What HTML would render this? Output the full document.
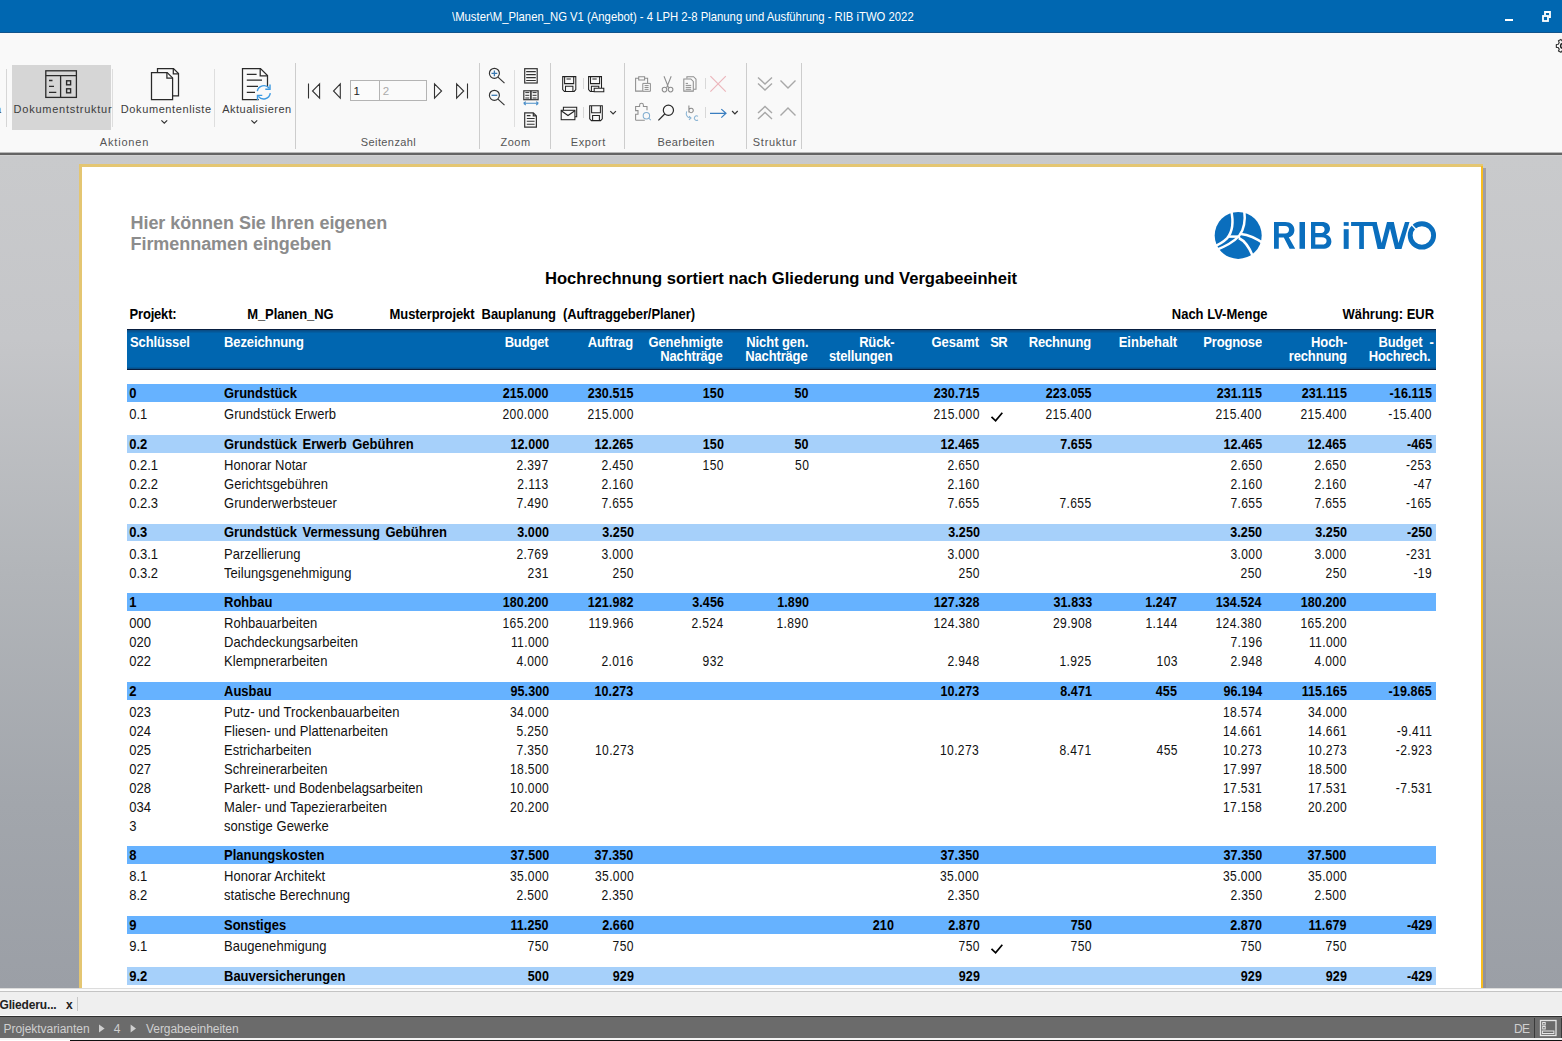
<!DOCTYPE html>
<html><head><meta charset="utf-8"><title>RIB iTWO</title>
<style>
html,body{margin:0;padding:0;}
body{width:1562px;height:1041px;position:relative;overflow:hidden;background:#fff;font-family:"Liberation Sans", sans-serif;}
.t{position:absolute;white-space:nowrap;line-height:1;font-family:"Liberation Sans", sans-serif;}
.tb{transform:scaleY(1.09);transform-origin:0 11px;}
svg{overflow:visible}
</style></head><body>
<div style="position:absolute;left:0;top:0;width:1562px;height:32px;background:#0067b1"></div><div style="position:absolute;left:0;top:32px;width:1562px;height:1px;background:#11548c"></div>
<div class="t" style="left:451.5px;top:10.80px;font-size:12.4px;color:#fff;font-weight:normal;transform:scaleX(0.912);transform-origin:0 0;">\Muster\M_Planen_NG V1 (Angebot) - 4 LPH 2-8 Planung und Ausführung - RIB iTWO 2022</div>
<div style="position:absolute;left:1505px;top:19px;width:8px;height:2px;background:#fff"></div>
<svg style="position:absolute;left:1540px;top:9px" width="14" height="15" viewBox="0 0 14 15"><path d="M5 6V3H10V8H9" fill="none" stroke="#fff" stroke-width="1.8"/><rect x="3" y="7" width="5" height="5" fill="none" stroke="#fff" stroke-width="1.8"/></svg>
<div style="position:absolute;left:0;top:33px;width:1562px;height:119px;background:#f9f9f9"></div>
<div style="position:absolute;left:0;top:152px;width:1562px;height:1px;background:#b8b8b8"></div>
<div style="position:absolute;left:0;top:153px;width:1562px;height:2px;background:#646464"></div>
<div style="position:absolute;left:0;top:155px;width:1562px;height:1px;background:#d2d2d2"></div>
<div style="position:absolute;left:295px;top:63px;width:1px;height:86px;background:#cdcdcd"></div>
<div style="position:absolute;left:479px;top:63px;width:1px;height:86px;background:#cdcdcd"></div>
<div style="position:absolute;left:550px;top:63px;width:1px;height:86px;background:#cdcdcd"></div>
<div style="position:absolute;left:624px;top:63px;width:1px;height:86px;background:#cdcdcd"></div>
<div style="position:absolute;left:746px;top:63px;width:1px;height:86px;background:#cdcdcd"></div>
<div style="position:absolute;left:801px;top:63px;width:1px;height:86px;background:#cdcdcd"></div>
<div style="position:absolute;left:6px;top:69px;width:1px;height:58px;background:#d6d6d6"></div>
<div style="position:absolute;left:112px;top:69px;width:1px;height:58px;background:#dedede"></div>
<div style="position:absolute;left:214px;top:69px;width:1px;height:58px;background:#dedede"></div>
<div style="position:absolute;left:514px;top:70px;width:1px;height:57px;background:#dedede"></div>
<div style="position:absolute;left:12px;top:65px;width:99px;height:65px;background:#d6d6d6"></div>
<div class="t" style="left:-5px;top:104.29px;font-size:11px;color:#3c3c3c;font-weight:normal;">a</div>
<svg style="position:absolute;left:44px;top:69px" width="34" height="30" viewBox="0 0 34 30" fill="none" stroke="#2a2a2a" stroke-width="1.3">
<rect x="1.8" y="1.8" width="30.6" height="26.6"/><path d="M1.8 6.6H32.4M16.6 6.6V28.4M5 11.5H8.5M5 17.3H10M5 23.3H12.3"/>
<rect x="22.6" y="11.8" width="4" height="4" stroke-width="1.4"/><rect x="22.6" y="19.8" width="4" height="4" stroke-width="1.4"/></svg>
<div class="t" style="left:13.6px;top:104.29px;font-size:11px;color:#3c3c3c;font-weight:normal;letter-spacing:0.75px;">Dokumentstruktur</div>
<svg style="position:absolute;left:150px;top:67px" width="32" height="34" viewBox="0 0 32 34" fill="none" stroke="#2a2a2a" stroke-width="1.25">
<path d="M7.5 5.2V1.5H23.5L28.5 6.5V28.8H22.8"/><path d="M23.3 1.5V6.8H28.5"/>
<path d="M1.5 5.5H17.2L22.6 10.9V32.5H1.5Z"/><path d="M16.9 5.5V11.2H22.6"/></svg>
<div class="t" style="left:120.8px;top:104.29px;font-size:11px;color:#3c3c3c;font-weight:normal;letter-spacing:0.6px;">Dokumentenliste</div>
<svg style="position:absolute;left:160px;top:119px" width="9" height="6" viewBox="0 0 9 6"><path d="M1.4 1.3L4.3 4.2L7.2 1.3" fill="none" stroke="#333" stroke-width="1.2"/></svg>
<svg style="position:absolute;left:241px;top:67px" width="34" height="34" viewBox="0 0 34 34" fill="none" stroke-width="1.25">
<path d="M17.8 32.5H1.5V1.5H19.5L26.5 8.5V20" stroke="#2a2a2a"/><path d="M19.2 1.5V8.8H26.5" stroke="#2a2a2a"/>
<path d="M5.8 7.3H15.6M5.8 13.2H21M5.8 19.3H17M5.8 25.3H14" stroke="#2a2a2a"/>
<path d="M16.3 24.2A6.7 6.7 0 0 1 28.2 21.3" stroke="#3d9ae2" stroke-width="1.4"/><path d="M29 17.5V22.3H24.3" stroke="#3d9ae2" stroke-width="1.4"/>
<path d="M29.3 26.2A6.7 6.7 0 0 1 17.4 29.4" stroke="#3d9ae2" stroke-width="1.4"/><path d="M16.5 33V28.4H21.3" stroke="#3d9ae2" stroke-width="1.4"/></svg>
<div class="t" style="left:222.2px;top:104.29px;font-size:11px;color:#3c3c3c;font-weight:normal;letter-spacing:0.5px;">Aktualisieren</div>
<svg style="position:absolute;left:250px;top:119px" width="9" height="6" viewBox="0 0 9 6"><path d="M1.4 1.3L4.3 4.2L7.2 1.3" fill="none" stroke="#333" stroke-width="1.2"/></svg>
<div class="t" style="left:99.8px;top:137.49px;font-size:11px;color:#555;font-weight:normal;letter-spacing:0.82px;">Aktionen</div>
<svg style="position:absolute;left:300px;top:76px" width="180" height="30" viewBox="0 0 180 30" fill="none" stroke="#333" stroke-width="1.1">
<path d="M8.5 7.4V22.6M19.6 7.8L12.5 15L19.6 22.2Z M40.3 7.8L33.5 15L40.3 22.2Z M134.5 7.8L141.6 15L134.5 22.2Z M156.6 7.8L163.7 15L156.6 22.2Z M167.5 7.4V22.6"/></svg>
<div style="position:absolute;left:350px;top:80px;width:28px;height:19px;border:1px solid #b4b4b4;background:#fbfbfb"></div>
<div style="position:absolute;left:379px;top:80px;width:46px;height:19px;border:1px solid #b4b4b4;background:#fafafa"></div>
<div class="t" style="left:353.5px;top:86.07px;font-size:11.5px;color:#222;font-weight:normal;">1</div>
<div class="t" style="left:382.8px;top:86.07px;font-size:11.5px;color:#aaa;font-weight:normal;">2</div>
<div class="t" style="left:360.8px;top:137.49px;font-size:11px;color:#555;font-weight:normal;letter-spacing:0.4px;">Seitenzahl</div>
<svg style="position:absolute;left:486px;top:66px" width="60" height="64" viewBox="0 0 60 64" fill="none" stroke="#333" stroke-width="1.15">
<circle cx="8.4" cy="7.3" r="5"/><path d="M8.4 4.4V10.2M5.5 7.3H11.3" stroke="#3a78b0" stroke-width="1.3"/><path d="M12 11.2L18.5 17.2"/>
<circle cx="8.4" cy="29.3" r="5"/><path d="M5.5 29.3H11.3" stroke="#3a78b0" stroke-width="1.3"/><path d="M12 33.2L18.5 39.2"/>
<rect x="38.7" y="2.7" width="12.5" height="14.3" stroke-width="1.2"/><path d="M40.2 5.6H49.8M40.2 8.6H49.8M40.2 11.6H49.8M40.2 14.5H49.8" stroke-width="1.1"/>
<rect x="37.8" y="24.8" width="14.3" height="8.9" stroke-width="1.2"/><path d="M44.9 24.8V33.7" stroke-width="1.6"/><path d="M39.3 26.6H43.3M39.3 29.3H43.3M39.3 32H43.3M46.6 26.6H50.6M46.6 29.3H50.6M46.6 32H50.6" stroke-width="1"/>
<path d="M37.6 37.3H52.4M37.6 37.3L39.8 35.6M37.6 37.3L39.8 39M52.4 37.3L50.2 35.6M52.4 37.3L50.2 39" stroke="#4a8ec8" stroke-width="1.1"/>
<path d="M38.7 46.8H47.3L50.4 49.9V61.1H38.7Z M47.3 46.8V49.9H50.4" stroke-width="1.2"/><path d="M40.8 49.6H44.5M40.8 52.4H48.6M40.8 55.3H48.6M40.8 58.2H48.6" stroke-width="1.05"/></svg>
<div class="t" style="left:500.5px;top:137.49px;font-size:11px;color:#555;font-weight:normal;letter-spacing:0.5px;">Zoom</div>
<svg style="position:absolute;left:556px;top:70px" width="70" height="56" viewBox="0 0 70 56" fill="none" stroke="#222" stroke-width="1.05">
<path d="M6.7 6.6H19.8V19.6L18.2 21.4H8.4L6.7 19.6Z M8.6 6.6V13.6H17.7V6.6 M10.5 8.9H14.8 M9.5 21.4V16.3H16.9V21.4"/>
<path d="M38.2 21.4H34.3L32.6 19.6V6.6H45.5V18.2 M34.5 6.6V13.6H43.6V6.6 M36.4 8.9H40.7 M35.4 21.4V16.3H42.8V18.2 M38.2 18.2H47.8V21.7H38.2Z"/>
<path d="M7.4 40.3V37.3H20.7V46.7H18.9"/><rect x="5.2" y="40.3" width="13.7" height="9.4" fill="#f9f9f9"/><path d="M5.2 40.8L12 45.5L18.9 40.8"/>
<path d="M33.7 35.8H46.3V48.8L44.6 50.6H35.4L33.7 48.8Z M35.6 35.8V42.8H44.4V35.8 M36.6 50.6V45.5H43.4V50.6"/>
<path d="M54.3 41.1L57.1 43.9L59.9 41.1" stroke="#333" stroke-width="1.2"/></svg>
<div style="position:absolute;left:583px;top:78px;width:1px;height:11px;background:#d8d8d8"></div>
<div style="position:absolute;left:583px;top:107px;width:1px;height:11px;background:#d8d8d8"></div>
<div class="t" style="left:570.8px;top:137.49px;font-size:11px;color:#555;font-weight:normal;letter-spacing:0.55px;">Export</div>
<svg style="position:absolute;left:630px;top:70px" width="115" height="56" viewBox="0 0 115 56" fill="none" stroke="#8e8e8e" stroke-width="1.05">
<path d="M12.8 21.1H5.6V8.2H8.7 M14.6 8.2H17.6V13 M8.7 6.7H14.6V10H8.7Z"/><path d="M12.8 13.4H20.4V21.3H12.8Z M14.6 15.6H18.6M14.6 17.5H18.6M14.6 19.4H18.6" stroke-width="1"/>
<path d="M34 6.2L38.6 17.8M41.2 6.2L36.6 17.8"/><circle cx="34.5" cy="19.6" r="2.3"/><circle cx="40.6" cy="19.6" r="2.3"/>
<path d="M56.9 8.5V6.7H63.6L66 9.1V19.2H63.8"/><path d="M53.8 8.9H60.8L63.3 11.4V21.1H53.8Z"/><path d="M55.7 13.4H58M55.7 15.4H61.2M55.7 17.4H61.2M55.7 19.3H61.2" stroke-width="1"/>
<path d="M80.4 6.2L95.8 21.6M95.8 6.2L80.4 21.6" stroke="#ecb6bc" stroke-width="1.2"/>
<path d="M5.6 50.3H14.8 M5.6 50.3V44.3H8V40.6H5.6V36.4H9.6V35.2A1.9 1.9 0 0 1 13.4 35.2V36.4H17V40.3"/><circle cx="16.4" cy="45.7" r="3.2" stroke="#82aed0"/><path d="M18.6 48L20.8 50.2" stroke="#82aed0"/>
<circle cx="38.4" cy="40.3" r="5.1" stroke="#2a2a2a" stroke-width="1.2"/><path d="M34.7 44L28.4 50.4" stroke="#2a2a2a" stroke-width="1.25"/>
<path d="M58.9 35.4V42.5 M58.9 40.4A2.2 2.2 0 1 1 58.9 40.5" stroke="#8a8a8a" stroke-width="1.05"/><path d="M56.7 41.4C55.5 44.5 57 47.5 60.3 48" stroke="#8ab4d4"/><path d="M59 46.2L61 48L59 49.8" stroke="#8ab4d4"/><path d="M68 46.3A2.3 2.3 0 1 0 68 50" stroke="#8ab4d4"/>
<path d="M80 43.3H96M91.3 39.1L96 43.3L91.3 47.6" stroke="#3a7ec0" stroke-width="1.2"/>
<path d="M102.1 41L104.9 43.9L107.7 41" stroke="#333" stroke-width="1.2"/></svg>
<div style="position:absolute;left:705px;top:78px;width:1px;height:11px;background:#d8d8d8"></div>
<div style="position:absolute;left:705px;top:107px;width:1px;height:11px;background:#d8d8d8"></div>
<div class="t" style="left:657.6px;top:137.49px;font-size:11px;color:#555;font-weight:normal;letter-spacing:0.4px;">Bearbeiten</div>
<svg style="position:absolute;left:750px;top:70px" width="52" height="56" viewBox="0 0 52 56" fill="none" stroke="#a8a8a8" stroke-width="1.4">
<path d="M8 7.5L15 14L22 7.5M8 13.5L15 20L22 13.5M30.5 10.5L38 18L45.5 10.5"/>
<path d="M8 43L15 36.5L22 43M8 49L15 42.5L22 49M30.5 45.5L38 38L45.5 45.5"/></svg>
<div class="t" style="left:752.8px;top:137.49px;font-size:11px;color:#555;font-weight:normal;letter-spacing:0.72px;">Struktur</div>
<svg style="position:absolute;left:1550px;top:36px" width="12" height="20" viewBox="0 0 12 20"><path d="M17.33 7.40 L17.73 8.27 L19.65 8.49 L19.65 11.31 L17.73 11.53 L17.33 12.40 L16.77 13.18 L17.55 14.95 L15.10 16.37 L13.95 14.81 L13.00 14.90 L12.05 14.81 L10.90 16.37 L8.45 14.95 L9.23 13.18 L8.67 12.40 L8.27 11.53 L6.35 11.31 L6.35 8.49 L8.27 8.27 L8.67 7.40 L9.23 6.62 L8.45 4.85 L10.90 3.43 L12.05 4.99 L13.00 4.90 L13.95 4.99 L15.10 3.43 L17.55 4.85 L16.77 6.62Z" fill="none" stroke="#333" stroke-width="1.15" stroke-linejoin="round"/><circle cx="13.0" cy="9.899999999999999" r="2.4" fill="none" stroke="#222" stroke-width="1.6"/></svg>
<div style="position:absolute;left:0;top:156px;width:1562px;height:832px;background:linear-gradient(#c9cacc 0%,#c5c6c9 22%,#b2b5b9 50%,#a2a6ac 78%,#9b9fa6 100%)"></div>
<div style="position:absolute;left:1483px;top:168px;width:3px;height:820px;background:#8e8c98;opacity:0.7"></div>
<div style="position:absolute;left:79px;top:164px;width:1404px;height:824px;background:#e4c672"></div>
<div style="position:absolute;left:1481px;top:166px;width:2px;height:822px;background:#f8bd20"></div>
<div style="position:absolute;left:82px;top:167px;width:1399px;height:821px;background:#fff"></div>
<div class="t" style="left:130.5px;top:213.96px;font-size:18px;color:#8c8c8c;font-weight:bold;letter-spacing:-0.05px;">Hier können Sie Ihren eigenen</div>
<div class="t" style="left:130.5px;top:234.96px;font-size:18px;color:#8c8c8c;font-weight:bold;letter-spacing:-0.05px;">Firmennamen eingeben</div>
<svg style="position:absolute;left:1210px;top:208px" width="230" height="56" viewBox="1210 208 230 56">
<circle cx="1238.2" cy="235.4" r="23.5" fill="#0a6ebd"/>
<g fill="none" stroke="#fff" stroke-width="2.5">
<path d="M1231 209.5C1233.8 222 1233 231.5 1227 238.3C1223 242.3 1219.5 244.3 1213 247"/>
<path d="M1244.2 209.5C1245.8 222 1243.2 230.8 1239.2 235.8C1234.5 241.2 1227.5 245.8 1214 251"/>
<path d="M1228.5 236.6L1240 236.6"/>
<path d="M1241 233.9C1248.5 234.6 1255.8 237.8 1264.5 244"/>
<path d="M1238.8 238C1245 241 1250.2 247.5 1254.5 261"/>
</g>
<g fill="#0a6ebd">
<path d="M1274 222H1285.2C1291 222 1294.4 225.3 1294.4 229.9C1294.4 233.6 1292.3 236.3 1288.8 237.2L1295.2 248.8H1289.6L1283.8 237.6H1278.8V248.8H1274ZM1278.8 226.1V233.5H1285C1287.6 233.5 1289 232.2 1289 229.8C1289 227.4 1287.6 226.1 1285 226.1Z"/>
<rect x="1299.5" y="222" width="5.5" height="26.8"/>
<path d="M1311 222H1321.8C1326.9 222 1330 224.6 1330 228.6C1330 231.5 1328.5 233.6 1326 234.6C1329.3 235.6 1331.4 238 1331.4 241.4C1331.4 245.9 1328 248.8 1322.2 248.8H1311ZM1315.3 226.1V233H1321.2C1323.3 233 1324.6 231.8 1324.6 229.6C1324.6 227.4 1323.3 226.1 1321.2 226.1ZM1315.3 237.3V244.6H1321.8C1324.8 244.6 1326.6 243.3 1326.6 240.9C1326.6 238.6 1324.8 237.3 1321.8 237.3Z"/>
<rect x="1343.7" y="222.1" width="5" height="3.7"/><rect x="1343.7" y="229.2" width="5" height="19.7"/>
<path d="M1351.1 222.1H1376.6V226.1H1363.9V248.9H1359.2V226.1H1351.1Z"/>
<path d="M1371.6 222.1H1376.6L1381.7 243L1387 222.1H1393.8L1398.5 243L1405 222.1H1409.5L1401.5 248.9H1395.1L1390 228.4L1384.7 248.9H1377.6Z"/>
</g>
<circle cx="1421.9" cy="235.4" r="11.7" fill="none" stroke="#0a6ebd" stroke-width="4.9"/>
<path d="M1411.5 224.5L1416.8 230.2" stroke="#fff" stroke-width="1.3"/>
</svg>
<div class="t" style="left:545px;top:271.15px;font-size:16.6px;color:#000;font-weight:bold;">Hochrechnung sortiert nach Gliederung und Vergabeeinheit</div>
<div class="t tb" style="left:129.6px;top:308.10px;font-size:13px;color:#000;font-weight:bold;letter-spacing:-0.2px;">Projekt:</div>
<div class="t tb" style="left:247.3px;top:308.10px;font-size:13px;color:#000;font-weight:bold;letter-spacing:-0.12px;">M_Planen_NG</div>
<div class="t tb" style="left:389.6px;top:308.10px;font-size:13px;color:#000;font-weight:bold;letter-spacing:-0.08px;">Musterprojekt&nbsp; Bauplanung&nbsp; (Auftraggeber/Planer)</div>
<div class="t tb" style="right:294.4000000000001px;top:308.10px;font-size:13px;color:#000;font-weight:bold;">Nach LV-Menge</div>
<div class="t tb" style="right:127.90000000000009px;top:308.10px;font-size:13px;color:#000;font-weight:bold;">Währung: EUR</div>
<div style="position:absolute;left:127px;top:329px;width:1309px;height:41px;background:#0066b0;border-top:1px solid #081e40;border-bottom:1px solid #081e40;box-sizing:border-box"></div>
<div style="position:absolute;left:127px;top:330px;width:1309px;height:3px;background:linear-gradient(#0c4a80,#0062aa)"></div><div style="position:absolute;left:127px;top:367px;width:1309px;height:2px;background:linear-gradient(#0062aa,#0a4a7e)"></div>
<div class="t tb" style="left:130px;top:335.60px;font-size:13px;color:#fff;font-weight:bold;letter-spacing:-0.1px;">Schlüssel</div>
<div class="t tb" style="left:224px;top:335.60px;font-size:13px;color:#fff;font-weight:bold;letter-spacing:-0.1px;">Bezeichnung</div>
<div class="t tb" style="right:1013.5px;top:335.60px;font-size:13px;color:#fff;font-weight:bold;letter-spacing:-0.15px;">Budget</div>
<div class="t tb" style="right:929px;top:335.60px;font-size:13px;color:#fff;font-weight:bold;letter-spacing:-0.15px;">Auftrag</div>
<div class="t tb" style="right:839px;top:335.60px;font-size:13px;color:#fff;font-weight:bold;letter-spacing:-0.05px;">Genehmigte</div>
<div class="t tb" style="right:839.5px;top:350.30px;font-size:13px;color:#fff;font-weight:bold;letter-spacing:-0.15px;">Nachträge</div>
<div class="t tb" style="right:753.5px;top:335.60px;font-size:13px;color:#fff;font-weight:bold;letter-spacing:-0.05px;">Nicht gen.</div>
<div class="t tb" style="right:754.5px;top:350.30px;font-size:13px;color:#fff;font-weight:bold;letter-spacing:-0.15px;">Nachträge</div>
<div class="t tb" style="right:667.5px;top:335.60px;font-size:13px;color:#fff;font-weight:bold;letter-spacing:-0.15px;">Rück-</div>
<div class="t tb" style="right:669.5px;top:350.30px;font-size:13px;color:#fff;font-weight:bold;letter-spacing:-0.15px;">stellungen</div>
<div class="t tb" style="right:582.8px;top:335.60px;font-size:13px;color:#fff;font-weight:bold;">Gesamt</div>
<div class="t tb" style="left:990.3px;top:335.60px;font-size:13px;color:#fff;font-weight:bold;letter-spacing:-0.8px;">SR</div>
<div class="t tb" style="right:471px;top:335.60px;font-size:13px;color:#fff;font-weight:bold;letter-spacing:-0.15px;">Rechnung</div>
<div class="t tb" style="right:384.79999999999995px;top:335.60px;font-size:13px;color:#fff;font-weight:bold;">Einbehalt</div>
<div class="t tb" style="right:300px;top:335.60px;font-size:13px;color:#fff;font-weight:bold;letter-spacing:-0.15px;">Prognose</div>
<div class="t tb" style="right:214.79999999999995px;top:335.60px;font-size:13px;color:#fff;font-weight:bold;letter-spacing:-0.15px;">Hoch-</div>
<div class="t tb" style="right:215.20000000000005px;top:350.30px;font-size:13px;color:#fff;font-weight:bold;letter-spacing:-0.15px;">rechnung</div>
<div class="t tb" style="right:128.20000000000005px;top:335.60px;font-size:13px;color:#fff;font-weight:bold;letter-spacing:-0.1px;">Budget&nbsp; -</div>
<div class="t tb" style="right:131.5px;top:350.30px;font-size:13px;color:#fff;font-weight:bold;letter-spacing:-0.2px;">Hochrech.</div>
<div style="position:absolute;left:127px;top:384px;width:1309px;height:18px;background:#66b2ff"></div>
<div class="t tb" style="left:129.2px;top:386.70px;font-size:13px;color:#000;font-weight:bold;">0</div>
<div class="t tb" style="left:224px;top:386.70px;font-size:13px;color:#000;font-weight:bold;word-spacing:2px;">Grundstück</div>
<div class="t tb" style="right:1013.1px;top:386.70px;font-size:13px;color:#000;font-weight:bold;letter-spacing:0.1px;transform:scale(0.965,1.09);transform-origin:100% 11px;">215.000</div>
<div class="t tb" style="right:928.1999999999999px;top:386.70px;font-size:13px;color:#000;font-weight:bold;letter-spacing:0.1px;transform:scale(0.965,1.09);transform-origin:100% 11px;">230.515</div>
<div class="t tb" style="right:838.1999999999999px;top:386.70px;font-size:13px;color:#000;font-weight:bold;letter-spacing:0.1px;transform:scale(0.965,1.09);transform-origin:100% 11px;">150</div>
<div class="t tb" style="right:753.1999999999999px;top:386.70px;font-size:13px;color:#000;font-weight:bold;letter-spacing:0.1px;transform:scale(0.965,1.09);transform-origin:100% 11px;">50</div>
<div class="t tb" style="right:582.4px;top:386.70px;font-size:13px;color:#000;font-weight:bold;letter-spacing:0.1px;transform:scale(0.965,1.09);transform-origin:100% 11px;">230.715</div>
<div class="t tb" style="right:470.0px;top:386.70px;font-size:13px;color:#000;font-weight:bold;letter-spacing:0.1px;transform:scale(0.965,1.09);transform-origin:100% 11px;">223.055</div>
<div class="t tb" style="right:299.9000000000001px;top:386.70px;font-size:13px;color:#000;font-weight:bold;letter-spacing:0.1px;transform:scale(0.965,1.09);transform-origin:100% 11px;">231.115</div>
<div class="t tb" style="right:215.20000000000005px;top:386.70px;font-size:13px;color:#000;font-weight:bold;letter-spacing:0.1px;transform:scale(0.965,1.09);transform-origin:100% 11px;">231.115</div>
<div class="t tb" style="right:129.9000000000001px;top:386.70px;font-size:13px;color:#000;font-weight:bold;letter-spacing:0.1px;transform:scale(0.965,1.09);transform-origin:100% 11px;">-16.115</div>
<div class="t tb" style="left:129.2px;top:407.50px;font-size:13px;color:#111;font-weight:normal;">0.1</div>
<div class="t tb" style="left:224px;top:407.50px;font-size:13px;color:#111;font-weight:normal;letter-spacing:0.05px;">Grundstück Erwerb</div>
<div class="t tb" style="right:1013.1px;top:407.50px;font-size:13px;color:#111;font-weight:normal;letter-spacing:0.4px;transform:scale(0.93,1.09);transform-origin:100% 11px;">200.000</div>
<div class="t tb" style="right:928.1999999999999px;top:407.50px;font-size:13px;color:#111;font-weight:normal;letter-spacing:0.4px;transform:scale(0.93,1.09);transform-origin:100% 11px;">215.000</div>
<div class="t tb" style="right:582.4px;top:407.50px;font-size:13px;color:#111;font-weight:normal;letter-spacing:0.4px;transform:scale(0.93,1.09);transform-origin:100% 11px;">215.000</div>
<svg style="position:absolute;left:991px;top:411.5px" width="13" height="11" viewBox="0 0 13 11"><path d="M0.5 4.9L4.6 8.8L11.3 0.8" fill="none" stroke="#000" stroke-width="1.75"/></svg>
<div class="t tb" style="right:470.0px;top:407.50px;font-size:13px;color:#111;font-weight:normal;letter-spacing:0.4px;transform:scale(0.93,1.09);transform-origin:100% 11px;">215.400</div>
<div class="t tb" style="right:299.9000000000001px;top:407.50px;font-size:13px;color:#111;font-weight:normal;letter-spacing:0.4px;transform:scale(0.93,1.09);transform-origin:100% 11px;">215.400</div>
<div class="t tb" style="right:215.20000000000005px;top:407.50px;font-size:13px;color:#111;font-weight:normal;letter-spacing:0.4px;transform:scale(0.93,1.09);transform-origin:100% 11px;">215.400</div>
<div class="t tb" style="right:129.9000000000001px;top:407.50px;font-size:13px;color:#111;font-weight:normal;letter-spacing:0.4px;transform:scale(0.93,1.09);transform-origin:100% 11px;">-15.400</div>
<div style="position:absolute;left:127px;top:435px;width:1309px;height:18px;background:#a6d0fa"></div>
<div class="t tb" style="left:129.2px;top:437.70px;font-size:13px;color:#000;font-weight:bold;">0.2</div>
<div class="t tb" style="left:224px;top:437.70px;font-size:13px;color:#000;font-weight:bold;word-spacing:2px;">Grundstück Erwerb Gebühren</div>
<div class="t tb" style="right:1013.1px;top:437.70px;font-size:13px;color:#000;font-weight:bold;letter-spacing:0.1px;transform:scale(0.965,1.09);transform-origin:100% 11px;">12.000</div>
<div class="t tb" style="right:928.1999999999999px;top:437.70px;font-size:13px;color:#000;font-weight:bold;letter-spacing:0.1px;transform:scale(0.965,1.09);transform-origin:100% 11px;">12.265</div>
<div class="t tb" style="right:838.1999999999999px;top:437.70px;font-size:13px;color:#000;font-weight:bold;letter-spacing:0.1px;transform:scale(0.965,1.09);transform-origin:100% 11px;">150</div>
<div class="t tb" style="right:753.1999999999999px;top:437.70px;font-size:13px;color:#000;font-weight:bold;letter-spacing:0.1px;transform:scale(0.965,1.09);transform-origin:100% 11px;">50</div>
<div class="t tb" style="right:582.4px;top:437.70px;font-size:13px;color:#000;font-weight:bold;letter-spacing:0.1px;transform:scale(0.965,1.09);transform-origin:100% 11px;">12.465</div>
<div class="t tb" style="right:470.0px;top:437.70px;font-size:13px;color:#000;font-weight:bold;letter-spacing:0.1px;transform:scale(0.965,1.09);transform-origin:100% 11px;">7.655</div>
<div class="t tb" style="right:299.9000000000001px;top:437.70px;font-size:13px;color:#000;font-weight:bold;letter-spacing:0.1px;transform:scale(0.965,1.09);transform-origin:100% 11px;">12.465</div>
<div class="t tb" style="right:215.20000000000005px;top:437.70px;font-size:13px;color:#000;font-weight:bold;letter-spacing:0.1px;transform:scale(0.965,1.09);transform-origin:100% 11px;">12.465</div>
<div class="t tb" style="right:129.9000000000001px;top:437.70px;font-size:13px;color:#000;font-weight:bold;letter-spacing:0.1px;transform:scale(0.965,1.09);transform-origin:100% 11px;">-465</div>
<div class="t tb" style="left:129.2px;top:459.30px;font-size:13px;color:#111;font-weight:normal;">0.2.1</div>
<div class="t tb" style="left:224px;top:459.30px;font-size:13px;color:#111;font-weight:normal;letter-spacing:0.05px;">Honorar Notar</div>
<div class="t tb" style="right:1013.1px;top:459.30px;font-size:13px;color:#111;font-weight:normal;letter-spacing:0.4px;transform:scale(0.93,1.09);transform-origin:100% 11px;">2.397</div>
<div class="t tb" style="right:928.1999999999999px;top:459.30px;font-size:13px;color:#111;font-weight:normal;letter-spacing:0.4px;transform:scale(0.93,1.09);transform-origin:100% 11px;">2.450</div>
<div class="t tb" style="right:838.1999999999999px;top:459.30px;font-size:13px;color:#111;font-weight:normal;letter-spacing:0.4px;transform:scale(0.93,1.09);transform-origin:100% 11px;">150</div>
<div class="t tb" style="right:753.1999999999999px;top:459.30px;font-size:13px;color:#111;font-weight:normal;letter-spacing:0.4px;transform:scale(0.93,1.09);transform-origin:100% 11px;">50</div>
<div class="t tb" style="right:582.4px;top:459.30px;font-size:13px;color:#111;font-weight:normal;letter-spacing:0.4px;transform:scale(0.93,1.09);transform-origin:100% 11px;">2.650</div>
<div class="t tb" style="right:299.9000000000001px;top:459.30px;font-size:13px;color:#111;font-weight:normal;letter-spacing:0.4px;transform:scale(0.93,1.09);transform-origin:100% 11px;">2.650</div>
<div class="t tb" style="right:215.20000000000005px;top:459.30px;font-size:13px;color:#111;font-weight:normal;letter-spacing:0.4px;transform:scale(0.93,1.09);transform-origin:100% 11px;">2.650</div>
<div class="t tb" style="right:129.9000000000001px;top:459.30px;font-size:13px;color:#111;font-weight:normal;letter-spacing:0.4px;transform:scale(0.93,1.09);transform-origin:100% 11px;">-253</div>
<div class="t tb" style="left:129.2px;top:478.20px;font-size:13px;color:#111;font-weight:normal;">0.2.2</div>
<div class="t tb" style="left:224px;top:478.20px;font-size:13px;color:#111;font-weight:normal;letter-spacing:0.05px;">Gerichtsgebühren</div>
<div class="t tb" style="right:1013.1px;top:478.20px;font-size:13px;color:#111;font-weight:normal;letter-spacing:0.4px;transform:scale(0.93,1.09);transform-origin:100% 11px;">2.113</div>
<div class="t tb" style="right:928.1999999999999px;top:478.20px;font-size:13px;color:#111;font-weight:normal;letter-spacing:0.4px;transform:scale(0.93,1.09);transform-origin:100% 11px;">2.160</div>
<div class="t tb" style="right:582.4px;top:478.20px;font-size:13px;color:#111;font-weight:normal;letter-spacing:0.4px;transform:scale(0.93,1.09);transform-origin:100% 11px;">2.160</div>
<div class="t tb" style="right:299.9000000000001px;top:478.20px;font-size:13px;color:#111;font-weight:normal;letter-spacing:0.4px;transform:scale(0.93,1.09);transform-origin:100% 11px;">2.160</div>
<div class="t tb" style="right:215.20000000000005px;top:478.20px;font-size:13px;color:#111;font-weight:normal;letter-spacing:0.4px;transform:scale(0.93,1.09);transform-origin:100% 11px;">2.160</div>
<div class="t tb" style="right:129.9000000000001px;top:478.20px;font-size:13px;color:#111;font-weight:normal;letter-spacing:0.4px;transform:scale(0.93,1.09);transform-origin:100% 11px;">-47</div>
<div class="t tb" style="left:129.2px;top:497.10px;font-size:13px;color:#111;font-weight:normal;">0.2.3</div>
<div class="t tb" style="left:224px;top:497.10px;font-size:13px;color:#111;font-weight:normal;letter-spacing:0.05px;">Grunderwerbsteuer</div>
<div class="t tb" style="right:1013.1px;top:497.10px;font-size:13px;color:#111;font-weight:normal;letter-spacing:0.4px;transform:scale(0.93,1.09);transform-origin:100% 11px;">7.490</div>
<div class="t tb" style="right:928.1999999999999px;top:497.10px;font-size:13px;color:#111;font-weight:normal;letter-spacing:0.4px;transform:scale(0.93,1.09);transform-origin:100% 11px;">7.655</div>
<div class="t tb" style="right:582.4px;top:497.10px;font-size:13px;color:#111;font-weight:normal;letter-spacing:0.4px;transform:scale(0.93,1.09);transform-origin:100% 11px;">7.655</div>
<div class="t tb" style="right:470.0px;top:497.10px;font-size:13px;color:#111;font-weight:normal;letter-spacing:0.4px;transform:scale(0.93,1.09);transform-origin:100% 11px;">7.655</div>
<div class="t tb" style="right:299.9000000000001px;top:497.10px;font-size:13px;color:#111;font-weight:normal;letter-spacing:0.4px;transform:scale(0.93,1.09);transform-origin:100% 11px;">7.655</div>
<div class="t tb" style="right:215.20000000000005px;top:497.10px;font-size:13px;color:#111;font-weight:normal;letter-spacing:0.4px;transform:scale(0.93,1.09);transform-origin:100% 11px;">7.655</div>
<div class="t tb" style="right:129.9000000000001px;top:497.10px;font-size:13px;color:#111;font-weight:normal;letter-spacing:0.4px;transform:scale(0.93,1.09);transform-origin:100% 11px;">-165</div>
<div style="position:absolute;left:127px;top:524px;width:1309px;height:17px;background:#a6d0fa"></div>
<div class="t tb" style="left:129.2px;top:525.70px;font-size:13px;color:#000;font-weight:bold;">0.3</div>
<div class="t tb" style="left:224px;top:525.70px;font-size:13px;color:#000;font-weight:bold;word-spacing:2px;">Grundstück Vermessung Gebühren</div>
<div class="t tb" style="right:1013.1px;top:525.70px;font-size:13px;color:#000;font-weight:bold;letter-spacing:0.1px;transform:scale(0.965,1.09);transform-origin:100% 11px;">3.000</div>
<div class="t tb" style="right:928.1999999999999px;top:525.70px;font-size:13px;color:#000;font-weight:bold;letter-spacing:0.1px;transform:scale(0.965,1.09);transform-origin:100% 11px;">3.250</div>
<div class="t tb" style="right:582.4px;top:525.70px;font-size:13px;color:#000;font-weight:bold;letter-spacing:0.1px;transform:scale(0.965,1.09);transform-origin:100% 11px;">3.250</div>
<div class="t tb" style="right:299.9000000000001px;top:525.70px;font-size:13px;color:#000;font-weight:bold;letter-spacing:0.1px;transform:scale(0.965,1.09);transform-origin:100% 11px;">3.250</div>
<div class="t tb" style="right:215.20000000000005px;top:525.70px;font-size:13px;color:#000;font-weight:bold;letter-spacing:0.1px;transform:scale(0.965,1.09);transform-origin:100% 11px;">3.250</div>
<div class="t tb" style="right:129.9000000000001px;top:525.70px;font-size:13px;color:#000;font-weight:bold;letter-spacing:0.1px;transform:scale(0.965,1.09);transform-origin:100% 11px;">-250</div>
<div class="t tb" style="left:129.2px;top:547.70px;font-size:13px;color:#111;font-weight:normal;">0.3.1</div>
<div class="t tb" style="left:224px;top:547.70px;font-size:13px;color:#111;font-weight:normal;letter-spacing:0.05px;">Parzellierung</div>
<div class="t tb" style="right:1013.1px;top:547.70px;font-size:13px;color:#111;font-weight:normal;letter-spacing:0.4px;transform:scale(0.93,1.09);transform-origin:100% 11px;">2.769</div>
<div class="t tb" style="right:928.1999999999999px;top:547.70px;font-size:13px;color:#111;font-weight:normal;letter-spacing:0.4px;transform:scale(0.93,1.09);transform-origin:100% 11px;">3.000</div>
<div class="t tb" style="right:582.4px;top:547.70px;font-size:13px;color:#111;font-weight:normal;letter-spacing:0.4px;transform:scale(0.93,1.09);transform-origin:100% 11px;">3.000</div>
<div class="t tb" style="right:299.9000000000001px;top:547.70px;font-size:13px;color:#111;font-weight:normal;letter-spacing:0.4px;transform:scale(0.93,1.09);transform-origin:100% 11px;">3.000</div>
<div class="t tb" style="right:215.20000000000005px;top:547.70px;font-size:13px;color:#111;font-weight:normal;letter-spacing:0.4px;transform:scale(0.93,1.09);transform-origin:100% 11px;">3.000</div>
<div class="t tb" style="right:129.9000000000001px;top:547.70px;font-size:13px;color:#111;font-weight:normal;letter-spacing:0.4px;transform:scale(0.93,1.09);transform-origin:100% 11px;">-231</div>
<div class="t tb" style="left:129.2px;top:566.60px;font-size:13px;color:#111;font-weight:normal;">0.3.2</div>
<div class="t tb" style="left:224px;top:566.60px;font-size:13px;color:#111;font-weight:normal;letter-spacing:0.05px;">Teilungsgenehmigung</div>
<div class="t tb" style="right:1013.1px;top:566.60px;font-size:13px;color:#111;font-weight:normal;letter-spacing:0.4px;transform:scale(0.93,1.09);transform-origin:100% 11px;">231</div>
<div class="t tb" style="right:928.1999999999999px;top:566.60px;font-size:13px;color:#111;font-weight:normal;letter-spacing:0.4px;transform:scale(0.93,1.09);transform-origin:100% 11px;">250</div>
<div class="t tb" style="right:582.4px;top:566.60px;font-size:13px;color:#111;font-weight:normal;letter-spacing:0.4px;transform:scale(0.93,1.09);transform-origin:100% 11px;">250</div>
<div class="t tb" style="right:299.9000000000001px;top:566.60px;font-size:13px;color:#111;font-weight:normal;letter-spacing:0.4px;transform:scale(0.93,1.09);transform-origin:100% 11px;">250</div>
<div class="t tb" style="right:215.20000000000005px;top:566.60px;font-size:13px;color:#111;font-weight:normal;letter-spacing:0.4px;transform:scale(0.93,1.09);transform-origin:100% 11px;">250</div>
<div class="t tb" style="right:129.9000000000001px;top:566.60px;font-size:13px;color:#111;font-weight:normal;letter-spacing:0.4px;transform:scale(0.93,1.09);transform-origin:100% 11px;">-19</div>
<div style="position:absolute;left:127px;top:593px;width:1309px;height:18px;background:#66b2ff"></div>
<div class="t tb" style="left:129.2px;top:595.70px;font-size:13px;color:#000;font-weight:bold;">1</div>
<div class="t tb" style="left:224px;top:595.70px;font-size:13px;color:#000;font-weight:bold;word-spacing:2px;">Rohbau</div>
<div class="t tb" style="right:1013.1px;top:595.70px;font-size:13px;color:#000;font-weight:bold;letter-spacing:0.1px;transform:scale(0.965,1.09);transform-origin:100% 11px;">180.200</div>
<div class="t tb" style="right:928.1999999999999px;top:595.70px;font-size:13px;color:#000;font-weight:bold;letter-spacing:0.1px;transform:scale(0.965,1.09);transform-origin:100% 11px;">121.982</div>
<div class="t tb" style="right:838.1999999999999px;top:595.70px;font-size:13px;color:#000;font-weight:bold;letter-spacing:0.1px;transform:scale(0.965,1.09);transform-origin:100% 11px;">3.456</div>
<div class="t tb" style="right:753.1999999999999px;top:595.70px;font-size:13px;color:#000;font-weight:bold;letter-spacing:0.1px;transform:scale(0.965,1.09);transform-origin:100% 11px;">1.890</div>
<div class="t tb" style="right:582.4px;top:595.70px;font-size:13px;color:#000;font-weight:bold;letter-spacing:0.1px;transform:scale(0.965,1.09);transform-origin:100% 11px;">127.328</div>
<div class="t tb" style="right:470.0px;top:595.70px;font-size:13px;color:#000;font-weight:bold;letter-spacing:0.1px;transform:scale(0.965,1.09);transform-origin:100% 11px;">31.833</div>
<div class="t tb" style="right:384.60000000000014px;top:595.70px;font-size:13px;color:#000;font-weight:bold;letter-spacing:0.1px;transform:scale(0.965,1.09);transform-origin:100% 11px;">1.247</div>
<div class="t tb" style="right:299.9000000000001px;top:595.70px;font-size:13px;color:#000;font-weight:bold;letter-spacing:0.1px;transform:scale(0.965,1.09);transform-origin:100% 11px;">134.524</div>
<div class="t tb" style="right:215.20000000000005px;top:595.70px;font-size:13px;color:#000;font-weight:bold;letter-spacing:0.1px;transform:scale(0.965,1.09);transform-origin:100% 11px;">180.200</div>
<div class="t tb" style="left:129.2px;top:616.80px;font-size:13px;color:#111;font-weight:normal;">000</div>
<div class="t tb" style="left:224px;top:616.80px;font-size:13px;color:#111;font-weight:normal;letter-spacing:0.05px;">Rohbauarbeiten</div>
<div class="t tb" style="right:1013.1px;top:616.80px;font-size:13px;color:#111;font-weight:normal;letter-spacing:0.4px;transform:scale(0.93,1.09);transform-origin:100% 11px;">165.200</div>
<div class="t tb" style="right:928.1999999999999px;top:616.80px;font-size:13px;color:#111;font-weight:normal;letter-spacing:0.4px;transform:scale(0.93,1.09);transform-origin:100% 11px;">119.966</div>
<div class="t tb" style="right:838.1999999999999px;top:616.80px;font-size:13px;color:#111;font-weight:normal;letter-spacing:0.4px;transform:scale(0.93,1.09);transform-origin:100% 11px;">2.524</div>
<div class="t tb" style="right:753.1999999999999px;top:616.80px;font-size:13px;color:#111;font-weight:normal;letter-spacing:0.4px;transform:scale(0.93,1.09);transform-origin:100% 11px;">1.890</div>
<div class="t tb" style="right:582.4px;top:616.80px;font-size:13px;color:#111;font-weight:normal;letter-spacing:0.4px;transform:scale(0.93,1.09);transform-origin:100% 11px;">124.380</div>
<div class="t tb" style="right:470.0px;top:616.80px;font-size:13px;color:#111;font-weight:normal;letter-spacing:0.4px;transform:scale(0.93,1.09);transform-origin:100% 11px;">29.908</div>
<div class="t tb" style="right:384.60000000000014px;top:616.80px;font-size:13px;color:#111;font-weight:normal;letter-spacing:0.4px;transform:scale(0.93,1.09);transform-origin:100% 11px;">1.144</div>
<div class="t tb" style="right:299.9000000000001px;top:616.80px;font-size:13px;color:#111;font-weight:normal;letter-spacing:0.4px;transform:scale(0.93,1.09);transform-origin:100% 11px;">124.380</div>
<div class="t tb" style="right:215.20000000000005px;top:616.80px;font-size:13px;color:#111;font-weight:normal;letter-spacing:0.4px;transform:scale(0.93,1.09);transform-origin:100% 11px;">165.200</div>
<div class="t tb" style="left:129.2px;top:635.80px;font-size:13px;color:#111;font-weight:normal;">020</div>
<div class="t tb" style="left:224px;top:635.80px;font-size:13px;color:#111;font-weight:normal;letter-spacing:0.05px;">Dachdeckungsarbeiten</div>
<div class="t tb" style="right:1013.1px;top:635.80px;font-size:13px;color:#111;font-weight:normal;letter-spacing:0.4px;transform:scale(0.93,1.09);transform-origin:100% 11px;">11.000</div>
<div class="t tb" style="right:299.9000000000001px;top:635.80px;font-size:13px;color:#111;font-weight:normal;letter-spacing:0.4px;transform:scale(0.93,1.09);transform-origin:100% 11px;">7.196</div>
<div class="t tb" style="right:215.20000000000005px;top:635.80px;font-size:13px;color:#111;font-weight:normal;letter-spacing:0.4px;transform:scale(0.93,1.09);transform-origin:100% 11px;">11.000</div>
<div class="t tb" style="left:129.2px;top:654.80px;font-size:13px;color:#111;font-weight:normal;">022</div>
<div class="t tb" style="left:224px;top:654.80px;font-size:13px;color:#111;font-weight:normal;letter-spacing:0.05px;">Klempnerarbeiten</div>
<div class="t tb" style="right:1013.1px;top:654.80px;font-size:13px;color:#111;font-weight:normal;letter-spacing:0.4px;transform:scale(0.93,1.09);transform-origin:100% 11px;">4.000</div>
<div class="t tb" style="right:928.1999999999999px;top:654.80px;font-size:13px;color:#111;font-weight:normal;letter-spacing:0.4px;transform:scale(0.93,1.09);transform-origin:100% 11px;">2.016</div>
<div class="t tb" style="right:838.1999999999999px;top:654.80px;font-size:13px;color:#111;font-weight:normal;letter-spacing:0.4px;transform:scale(0.93,1.09);transform-origin:100% 11px;">932</div>
<div class="t tb" style="right:582.4px;top:654.80px;font-size:13px;color:#111;font-weight:normal;letter-spacing:0.4px;transform:scale(0.93,1.09);transform-origin:100% 11px;">2.948</div>
<div class="t tb" style="right:470.0px;top:654.80px;font-size:13px;color:#111;font-weight:normal;letter-spacing:0.4px;transform:scale(0.93,1.09);transform-origin:100% 11px;">1.925</div>
<div class="t tb" style="right:384.60000000000014px;top:654.80px;font-size:13px;color:#111;font-weight:normal;letter-spacing:0.4px;transform:scale(0.93,1.09);transform-origin:100% 11px;">103</div>
<div class="t tb" style="right:299.9000000000001px;top:654.80px;font-size:13px;color:#111;font-weight:normal;letter-spacing:0.4px;transform:scale(0.93,1.09);transform-origin:100% 11px;">2.948</div>
<div class="t tb" style="right:215.20000000000005px;top:654.80px;font-size:13px;color:#111;font-weight:normal;letter-spacing:0.4px;transform:scale(0.93,1.09);transform-origin:100% 11px;">4.000</div>
<div style="position:absolute;left:127px;top:682px;width:1309px;height:18px;background:#66b2ff"></div>
<div class="t tb" style="left:129.2px;top:684.70px;font-size:13px;color:#000;font-weight:bold;">2</div>
<div class="t tb" style="left:224px;top:684.70px;font-size:13px;color:#000;font-weight:bold;word-spacing:2px;">Ausbau</div>
<div class="t tb" style="right:1013.1px;top:684.70px;font-size:13px;color:#000;font-weight:bold;letter-spacing:0.1px;transform:scale(0.965,1.09);transform-origin:100% 11px;">95.300</div>
<div class="t tb" style="right:928.1999999999999px;top:684.70px;font-size:13px;color:#000;font-weight:bold;letter-spacing:0.1px;transform:scale(0.965,1.09);transform-origin:100% 11px;">10.273</div>
<div class="t tb" style="right:582.4px;top:684.70px;font-size:13px;color:#000;font-weight:bold;letter-spacing:0.1px;transform:scale(0.965,1.09);transform-origin:100% 11px;">10.273</div>
<div class="t tb" style="right:470.0px;top:684.70px;font-size:13px;color:#000;font-weight:bold;letter-spacing:0.1px;transform:scale(0.965,1.09);transform-origin:100% 11px;">8.471</div>
<div class="t tb" style="right:384.60000000000014px;top:684.70px;font-size:13px;color:#000;font-weight:bold;letter-spacing:0.1px;transform:scale(0.965,1.09);transform-origin:100% 11px;">455</div>
<div class="t tb" style="right:299.9000000000001px;top:684.70px;font-size:13px;color:#000;font-weight:bold;letter-spacing:0.1px;transform:scale(0.965,1.09);transform-origin:100% 11px;">96.194</div>
<div class="t tb" style="right:215.20000000000005px;top:684.70px;font-size:13px;color:#000;font-weight:bold;letter-spacing:0.1px;transform:scale(0.965,1.09);transform-origin:100% 11px;">115.165</div>
<div class="t tb" style="right:129.9000000000001px;top:684.70px;font-size:13px;color:#000;font-weight:bold;letter-spacing:0.1px;transform:scale(0.965,1.09);transform-origin:100% 11px;">-19.865</div>
<div class="t tb" style="left:129.2px;top:706.30px;font-size:13px;color:#111;font-weight:normal;">023</div>
<div class="t tb" style="left:224px;top:706.30px;font-size:13px;color:#111;font-weight:normal;letter-spacing:0.05px;">Putz- und Trockenbauarbeiten</div>
<div class="t tb" style="right:1013.1px;top:706.30px;font-size:13px;color:#111;font-weight:normal;letter-spacing:0.4px;transform:scale(0.93,1.09);transform-origin:100% 11px;">34.000</div>
<div class="t tb" style="right:299.9000000000001px;top:706.30px;font-size:13px;color:#111;font-weight:normal;letter-spacing:0.4px;transform:scale(0.93,1.09);transform-origin:100% 11px;">18.574</div>
<div class="t tb" style="right:215.20000000000005px;top:706.30px;font-size:13px;color:#111;font-weight:normal;letter-spacing:0.4px;transform:scale(0.93,1.09);transform-origin:100% 11px;">34.000</div>
<div class="t tb" style="left:129.2px;top:725.30px;font-size:13px;color:#111;font-weight:normal;">024</div>
<div class="t tb" style="left:224px;top:725.30px;font-size:13px;color:#111;font-weight:normal;letter-spacing:0.05px;">Fliesen- und Plattenarbeiten</div>
<div class="t tb" style="right:1013.1px;top:725.30px;font-size:13px;color:#111;font-weight:normal;letter-spacing:0.4px;transform:scale(0.93,1.09);transform-origin:100% 11px;">5.250</div>
<div class="t tb" style="right:299.9000000000001px;top:725.30px;font-size:13px;color:#111;font-weight:normal;letter-spacing:0.4px;transform:scale(0.93,1.09);transform-origin:100% 11px;">14.661</div>
<div class="t tb" style="right:215.20000000000005px;top:725.30px;font-size:13px;color:#111;font-weight:normal;letter-spacing:0.4px;transform:scale(0.93,1.09);transform-origin:100% 11px;">14.661</div>
<div class="t tb" style="right:129.9000000000001px;top:725.30px;font-size:13px;color:#111;font-weight:normal;letter-spacing:0.4px;transform:scale(0.93,1.09);transform-origin:100% 11px;">-9.411</div>
<div class="t tb" style="left:129.2px;top:744.30px;font-size:13px;color:#111;font-weight:normal;">025</div>
<div class="t tb" style="left:224px;top:744.30px;font-size:13px;color:#111;font-weight:normal;letter-spacing:0.05px;">Estricharbeiten</div>
<div class="t tb" style="right:1013.1px;top:744.30px;font-size:13px;color:#111;font-weight:normal;letter-spacing:0.4px;transform:scale(0.93,1.09);transform-origin:100% 11px;">7.350</div>
<div class="t tb" style="right:928.1999999999999px;top:744.30px;font-size:13px;color:#111;font-weight:normal;letter-spacing:0.4px;transform:scale(0.93,1.09);transform-origin:100% 11px;">10.273</div>
<div class="t tb" style="right:582.4px;top:744.30px;font-size:13px;color:#111;font-weight:normal;letter-spacing:0.4px;transform:scale(0.93,1.09);transform-origin:100% 11px;">10.273</div>
<div class="t tb" style="right:470.0px;top:744.30px;font-size:13px;color:#111;font-weight:normal;letter-spacing:0.4px;transform:scale(0.93,1.09);transform-origin:100% 11px;">8.471</div>
<div class="t tb" style="right:384.60000000000014px;top:744.30px;font-size:13px;color:#111;font-weight:normal;letter-spacing:0.4px;transform:scale(0.93,1.09);transform-origin:100% 11px;">455</div>
<div class="t tb" style="right:299.9000000000001px;top:744.30px;font-size:13px;color:#111;font-weight:normal;letter-spacing:0.4px;transform:scale(0.93,1.09);transform-origin:100% 11px;">10.273</div>
<div class="t tb" style="right:215.20000000000005px;top:744.30px;font-size:13px;color:#111;font-weight:normal;letter-spacing:0.4px;transform:scale(0.93,1.09);transform-origin:100% 11px;">10.273</div>
<div class="t tb" style="right:129.9000000000001px;top:744.30px;font-size:13px;color:#111;font-weight:normal;letter-spacing:0.4px;transform:scale(0.93,1.09);transform-origin:100% 11px;">-2.923</div>
<div class="t tb" style="left:129.2px;top:763.40px;font-size:13px;color:#111;font-weight:normal;">027</div>
<div class="t tb" style="left:224px;top:763.40px;font-size:13px;color:#111;font-weight:normal;letter-spacing:0.05px;">Schreinerarbeiten</div>
<div class="t tb" style="right:1013.1px;top:763.40px;font-size:13px;color:#111;font-weight:normal;letter-spacing:0.4px;transform:scale(0.93,1.09);transform-origin:100% 11px;">18.500</div>
<div class="t tb" style="right:299.9000000000001px;top:763.40px;font-size:13px;color:#111;font-weight:normal;letter-spacing:0.4px;transform:scale(0.93,1.09);transform-origin:100% 11px;">17.997</div>
<div class="t tb" style="right:215.20000000000005px;top:763.40px;font-size:13px;color:#111;font-weight:normal;letter-spacing:0.4px;transform:scale(0.93,1.09);transform-origin:100% 11px;">18.500</div>
<div class="t tb" style="left:129.2px;top:781.50px;font-size:13px;color:#111;font-weight:normal;">028</div>
<div class="t tb" style="left:224px;top:781.50px;font-size:13px;color:#111;font-weight:normal;letter-spacing:0.05px;">Parkett- und Bodenbelagsarbeiten</div>
<div class="t tb" style="right:1013.1px;top:781.50px;font-size:13px;color:#111;font-weight:normal;letter-spacing:0.4px;transform:scale(0.93,1.09);transform-origin:100% 11px;">10.000</div>
<div class="t tb" style="right:299.9000000000001px;top:781.50px;font-size:13px;color:#111;font-weight:normal;letter-spacing:0.4px;transform:scale(0.93,1.09);transform-origin:100% 11px;">17.531</div>
<div class="t tb" style="right:215.20000000000005px;top:781.50px;font-size:13px;color:#111;font-weight:normal;letter-spacing:0.4px;transform:scale(0.93,1.09);transform-origin:100% 11px;">17.531</div>
<div class="t tb" style="right:129.9000000000001px;top:781.50px;font-size:13px;color:#111;font-weight:normal;letter-spacing:0.4px;transform:scale(0.93,1.09);transform-origin:100% 11px;">-7.531</div>
<div class="t tb" style="left:129.2px;top:800.50px;font-size:13px;color:#111;font-weight:normal;">034</div>
<div class="t tb" style="left:224px;top:800.50px;font-size:13px;color:#111;font-weight:normal;letter-spacing:0.05px;">Maler- und Tapezierarbeiten</div>
<div class="t tb" style="right:1013.1px;top:800.50px;font-size:13px;color:#111;font-weight:normal;letter-spacing:0.4px;transform:scale(0.93,1.09);transform-origin:100% 11px;">20.200</div>
<div class="t tb" style="right:299.9000000000001px;top:800.50px;font-size:13px;color:#111;font-weight:normal;letter-spacing:0.4px;transform:scale(0.93,1.09);transform-origin:100% 11px;">17.158</div>
<div class="t tb" style="right:215.20000000000005px;top:800.50px;font-size:13px;color:#111;font-weight:normal;letter-spacing:0.4px;transform:scale(0.93,1.09);transform-origin:100% 11px;">20.200</div>
<div class="t tb" style="left:129.2px;top:820.40px;font-size:13px;color:#111;font-weight:normal;">3</div>
<div class="t tb" style="left:224px;top:820.40px;font-size:13px;color:#111;font-weight:normal;letter-spacing:0.05px;">sonstige Gewerke</div>
<div style="position:absolute;left:127px;top:846px;width:1309px;height:18px;background:#66b2ff"></div>
<div class="t tb" style="left:129.2px;top:848.70px;font-size:13px;color:#000;font-weight:bold;">8</div>
<div class="t tb" style="left:224px;top:848.70px;font-size:13px;color:#000;font-weight:bold;word-spacing:2px;">Planungskosten</div>
<div class="t tb" style="right:1013.1px;top:848.70px;font-size:13px;color:#000;font-weight:bold;letter-spacing:0.1px;transform:scale(0.965,1.09);transform-origin:100% 11px;">37.500</div>
<div class="t tb" style="right:928.1999999999999px;top:848.70px;font-size:13px;color:#000;font-weight:bold;letter-spacing:0.1px;transform:scale(0.965,1.09);transform-origin:100% 11px;">37.350</div>
<div class="t tb" style="right:582.4px;top:848.70px;font-size:13px;color:#000;font-weight:bold;letter-spacing:0.1px;transform:scale(0.965,1.09);transform-origin:100% 11px;">37.350</div>
<div class="t tb" style="right:299.9000000000001px;top:848.70px;font-size:13px;color:#000;font-weight:bold;letter-spacing:0.1px;transform:scale(0.965,1.09);transform-origin:100% 11px;">37.350</div>
<div class="t tb" style="right:215.20000000000005px;top:848.70px;font-size:13px;color:#000;font-weight:bold;letter-spacing:0.1px;transform:scale(0.965,1.09);transform-origin:100% 11px;">37.500</div>
<div class="t tb" style="left:129.2px;top:870.40px;font-size:13px;color:#111;font-weight:normal;">8.1</div>
<div class="t tb" style="left:224px;top:870.40px;font-size:13px;color:#111;font-weight:normal;letter-spacing:0.05px;">Honorar Architekt</div>
<div class="t tb" style="right:1013.1px;top:870.40px;font-size:13px;color:#111;font-weight:normal;letter-spacing:0.4px;transform:scale(0.93,1.09);transform-origin:100% 11px;">35.000</div>
<div class="t tb" style="right:928.1999999999999px;top:870.40px;font-size:13px;color:#111;font-weight:normal;letter-spacing:0.4px;transform:scale(0.93,1.09);transform-origin:100% 11px;">35.000</div>
<div class="t tb" style="right:582.4px;top:870.40px;font-size:13px;color:#111;font-weight:normal;letter-spacing:0.4px;transform:scale(0.93,1.09);transform-origin:100% 11px;">35.000</div>
<div class="t tb" style="right:299.9000000000001px;top:870.40px;font-size:13px;color:#111;font-weight:normal;letter-spacing:0.4px;transform:scale(0.93,1.09);transform-origin:100% 11px;">35.000</div>
<div class="t tb" style="right:215.20000000000005px;top:870.40px;font-size:13px;color:#111;font-weight:normal;letter-spacing:0.4px;transform:scale(0.93,1.09);transform-origin:100% 11px;">35.000</div>
<div class="t tb" style="left:129.2px;top:888.50px;font-size:13px;color:#111;font-weight:normal;">8.2</div>
<div class="t tb" style="left:224px;top:888.50px;font-size:13px;color:#111;font-weight:normal;letter-spacing:0.05px;">statische Berechnung</div>
<div class="t tb" style="right:1013.1px;top:888.50px;font-size:13px;color:#111;font-weight:normal;letter-spacing:0.4px;transform:scale(0.93,1.09);transform-origin:100% 11px;">2.500</div>
<div class="t tb" style="right:928.1999999999999px;top:888.50px;font-size:13px;color:#111;font-weight:normal;letter-spacing:0.4px;transform:scale(0.93,1.09);transform-origin:100% 11px;">2.350</div>
<div class="t tb" style="right:582.4px;top:888.50px;font-size:13px;color:#111;font-weight:normal;letter-spacing:0.4px;transform:scale(0.93,1.09);transform-origin:100% 11px;">2.350</div>
<div class="t tb" style="right:299.9000000000001px;top:888.50px;font-size:13px;color:#111;font-weight:normal;letter-spacing:0.4px;transform:scale(0.93,1.09);transform-origin:100% 11px;">2.350</div>
<div class="t tb" style="right:215.20000000000005px;top:888.50px;font-size:13px;color:#111;font-weight:normal;letter-spacing:0.4px;transform:scale(0.93,1.09);transform-origin:100% 11px;">2.500</div>
<div style="position:absolute;left:127px;top:916px;width:1309px;height:18px;background:#66b2ff"></div>
<div class="t tb" style="left:129.2px;top:918.70px;font-size:13px;color:#000;font-weight:bold;">9</div>
<div class="t tb" style="left:224px;top:918.70px;font-size:13px;color:#000;font-weight:bold;word-spacing:2px;">Sonstiges</div>
<div class="t tb" style="right:1013.1px;top:918.70px;font-size:13px;color:#000;font-weight:bold;letter-spacing:0.1px;transform:scale(0.965,1.09);transform-origin:100% 11px;">11.250</div>
<div class="t tb" style="right:928.1999999999999px;top:918.70px;font-size:13px;color:#000;font-weight:bold;letter-spacing:0.1px;transform:scale(0.965,1.09);transform-origin:100% 11px;">2.660</div>
<div class="t tb" style="right:668.1999999999999px;top:918.70px;font-size:13px;color:#000;font-weight:bold;letter-spacing:0.1px;transform:scale(0.965,1.09);transform-origin:100% 11px;">210</div>
<div class="t tb" style="right:582.4px;top:918.70px;font-size:13px;color:#000;font-weight:bold;letter-spacing:0.1px;transform:scale(0.965,1.09);transform-origin:100% 11px;">2.870</div>
<div class="t tb" style="right:470.0px;top:918.70px;font-size:13px;color:#000;font-weight:bold;letter-spacing:0.1px;transform:scale(0.965,1.09);transform-origin:100% 11px;">750</div>
<div class="t tb" style="right:299.9000000000001px;top:918.70px;font-size:13px;color:#000;font-weight:bold;letter-spacing:0.1px;transform:scale(0.965,1.09);transform-origin:100% 11px;">2.870</div>
<div class="t tb" style="right:215.20000000000005px;top:918.70px;font-size:13px;color:#000;font-weight:bold;letter-spacing:0.1px;transform:scale(0.965,1.09);transform-origin:100% 11px;">11.679</div>
<div class="t tb" style="right:129.9000000000001px;top:918.70px;font-size:13px;color:#000;font-weight:bold;letter-spacing:0.1px;transform:scale(0.965,1.09);transform-origin:100% 11px;">-429</div>
<div class="t tb" style="left:129.2px;top:940.40px;font-size:13px;color:#111;font-weight:normal;">9.1</div>
<div class="t tb" style="left:224px;top:940.40px;font-size:13px;color:#111;font-weight:normal;letter-spacing:0.05px;">Baugenehmigung</div>
<div class="t tb" style="right:1013.1px;top:940.40px;font-size:13px;color:#111;font-weight:normal;letter-spacing:0.4px;transform:scale(0.93,1.09);transform-origin:100% 11px;">750</div>
<div class="t tb" style="right:928.1999999999999px;top:940.40px;font-size:13px;color:#111;font-weight:normal;letter-spacing:0.4px;transform:scale(0.93,1.09);transform-origin:100% 11px;">750</div>
<div class="t tb" style="right:582.4px;top:940.40px;font-size:13px;color:#111;font-weight:normal;letter-spacing:0.4px;transform:scale(0.93,1.09);transform-origin:100% 11px;">750</div>
<svg style="position:absolute;left:991px;top:944.4px" width="13" height="11" viewBox="0 0 13 11"><path d="M0.5 4.9L4.6 8.8L11.3 0.8" fill="none" stroke="#000" stroke-width="1.75"/></svg>
<div class="t tb" style="right:470.0px;top:940.40px;font-size:13px;color:#111;font-weight:normal;letter-spacing:0.4px;transform:scale(0.93,1.09);transform-origin:100% 11px;">750</div>
<div class="t tb" style="right:299.9000000000001px;top:940.40px;font-size:13px;color:#111;font-weight:normal;letter-spacing:0.4px;transform:scale(0.93,1.09);transform-origin:100% 11px;">750</div>
<div class="t tb" style="right:215.20000000000005px;top:940.40px;font-size:13px;color:#111;font-weight:normal;letter-spacing:0.4px;transform:scale(0.93,1.09);transform-origin:100% 11px;">750</div>
<div style="position:absolute;left:127px;top:967px;width:1309px;height:18px;background:#a6d0fa"></div>
<div class="t tb" style="left:129.2px;top:969.70px;font-size:13px;color:#000;font-weight:bold;">9.2</div>
<div class="t tb" style="left:224px;top:969.70px;font-size:13px;color:#000;font-weight:bold;word-spacing:2px;">Bauversicherungen</div>
<div class="t tb" style="right:1013.1px;top:969.70px;font-size:13px;color:#000;font-weight:bold;letter-spacing:0.1px;transform:scale(0.965,1.09);transform-origin:100% 11px;">500</div>
<div class="t tb" style="right:928.1999999999999px;top:969.70px;font-size:13px;color:#000;font-weight:bold;letter-spacing:0.1px;transform:scale(0.965,1.09);transform-origin:100% 11px;">929</div>
<div class="t tb" style="right:582.4px;top:969.70px;font-size:13px;color:#000;font-weight:bold;letter-spacing:0.1px;transform:scale(0.965,1.09);transform-origin:100% 11px;">929</div>
<div class="t tb" style="right:299.9000000000001px;top:969.70px;font-size:13px;color:#000;font-weight:bold;letter-spacing:0.1px;transform:scale(0.965,1.09);transform-origin:100% 11px;">929</div>
<div class="t tb" style="right:215.20000000000005px;top:969.70px;font-size:13px;color:#000;font-weight:bold;letter-spacing:0.1px;transform:scale(0.965,1.09);transform-origin:100% 11px;">929</div>
<div class="t tb" style="right:129.9000000000001px;top:969.70px;font-size:13px;color:#000;font-weight:bold;letter-spacing:0.1px;transform:scale(0.965,1.09);transform-origin:100% 11px;">-429</div>
<div style="position:absolute;left:0;top:988px;width:1562px;height:3px;background:#fafafa"></div><div style="position:absolute;left:0;top:988px;width:1562px;height:1px;background:#dcdcdc"></div>
<div style="position:absolute;left:0;top:991px;width:1562px;height:1px;background:#c4c4c4"></div>
<div style="position:absolute;left:0;top:992px;width:1562px;height:23px;background:#efefef"></div>
<div style="position:absolute;left:0;top:1015px;width:1562px;height:1px;background:#fdfdfd"></div>
<div class="t" style="left:-0.5px;top:999.24px;font-size:12px;color:#222;font-weight:bold;letter-spacing:-0.15px;">Gliederu...</div>
<div class="t" style="left:66px;top:999.24px;font-size:12px;color:#222;font-weight:bold;">x</div>
<div style="position:absolute;left:77px;top:997px;width:1px;height:14px;background:#c8c8c8"></div>
<div style="position:absolute;left:0;top:1016px;width:1562px;height:1px;background:#2e2e2e"></div>
<div style="position:absolute;left:0;top:1017px;width:1562px;height:21px;background:#6b6b6b"></div>
<div style="position:absolute;left:0;top:1038px;width:1562px;height:2px;background:#f4f4f4"></div>
<div style="position:absolute;left:70px;top:1040px;width:1492px;height:1px;background:#111"></div>
<div class="t" style="left:3.6px;top:1023.04px;font-size:12px;color:#cfcfcf;font-weight:normal;letter-spacing:-0.05px;">Projektvarianten</div>
<svg style="position:absolute;left:98px;top:1024px" width="8" height="10" viewBox="0 0 8 10"><path d="M1 0.6L6.6 4.6L1 8.6Z" fill="#cfcfcf"/></svg>
<div class="t" style="left:113.8px;top:1023.04px;font-size:12px;color:#cfcfcf;font-weight:normal;">4</div>
<svg style="position:absolute;left:130px;top:1024px" width="8" height="10" viewBox="0 0 8 10"><path d="M0.6 0.6L6 4.6L0.6 8.6Z" fill="#cfcfcf"/></svg>
<div class="t" style="left:146px;top:1023.04px;font-size:12px;color:#cfcfcf;font-weight:normal;letter-spacing:-0.05px;">Vergabeeinheiten</div>
<div class="t" style="right:32.5px;top:1022.84px;font-size:12px;color:#cfcfcf;font-weight:normal;letter-spacing:-0.6px;">DE</div>
<div style="position:absolute;left:1534px;top:1018px;width:1px;height:20px;background:#3a3a3a"></div>
<div style="position:absolute;left:1561px;top:1018px;width:1px;height:20px;background:#3a3a3a"></div>
<svg style="position:absolute;left:1539px;top:1019px" width="19" height="18" viewBox="0 0 19 18" fill="none" stroke="#e6e6e6" stroke-width="1.3">
<rect x="1.5" y="1.5" width="15.5" height="15"/><rect x="3.7" y="3.5" width="2.5" height="2.5" stroke-width="1"/><rect x="3.7" y="7.5" width="2.5" height="2.5" stroke-width="1"/><rect x="3.4" y="12" width="11.5" height="2.5" stroke-width="1"/></svg>
</body></html>
